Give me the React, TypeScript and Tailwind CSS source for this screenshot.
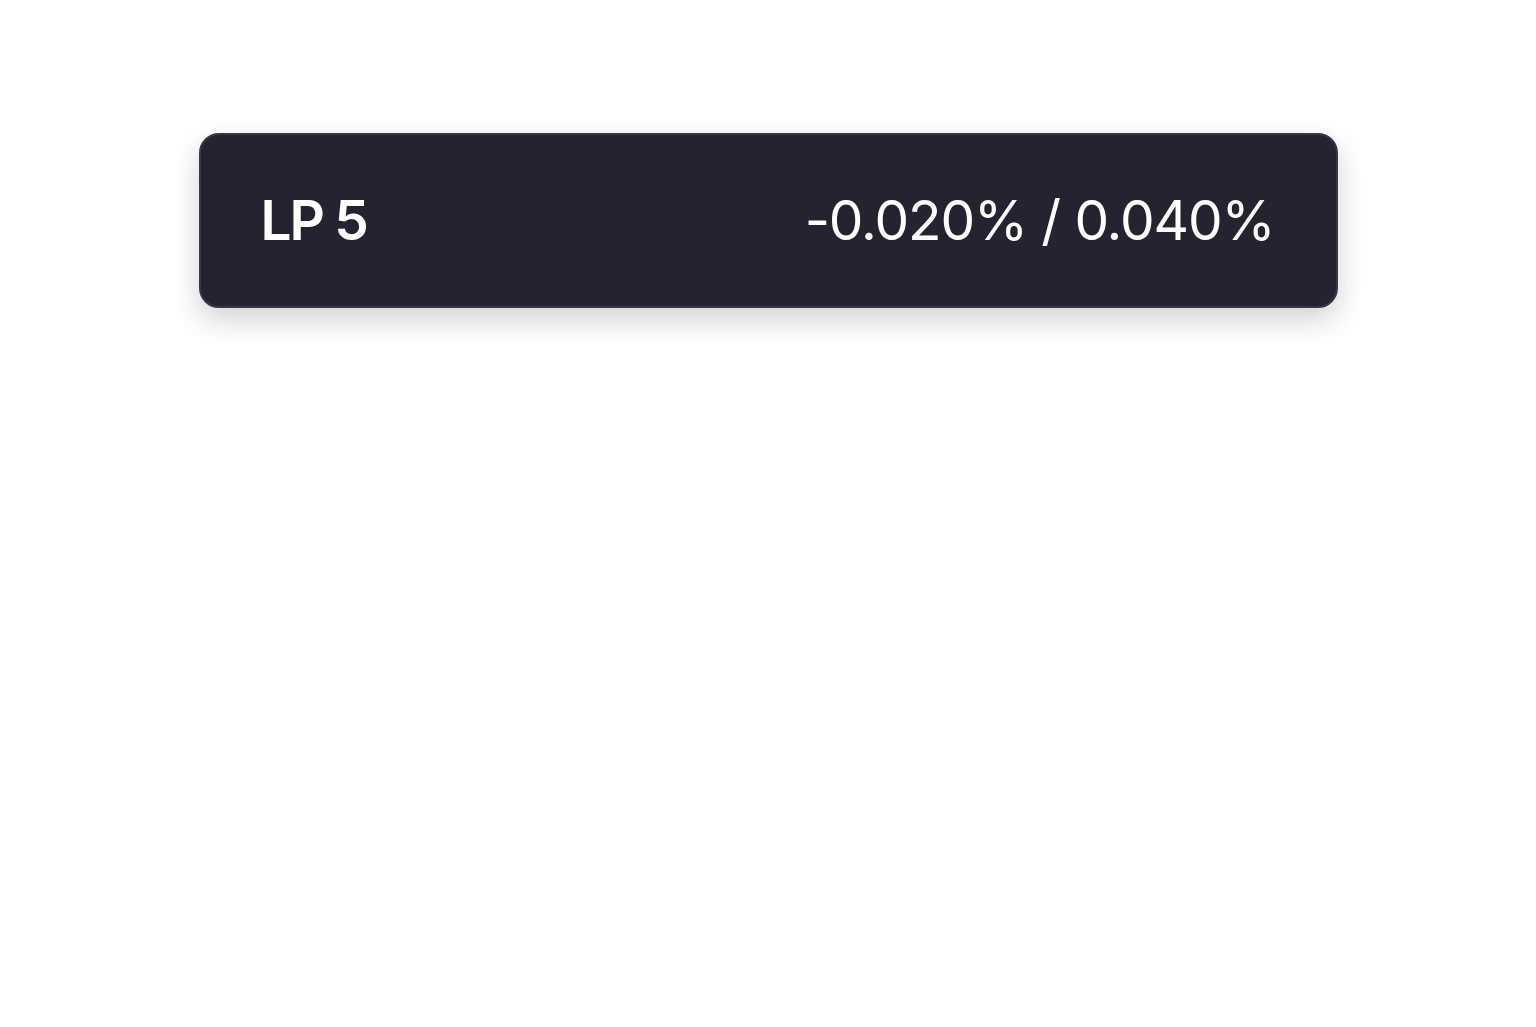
import React from 'react';

interface RateRowProps {
  label: string;
  maker: number;
  taker: number;
}

const fmt = (v: number) => `${v.toFixed(3)}%`;

const RateRow: React.FC<RateRowProps> = ({ label, maker, taker }) => (
  <div className="flex h-[175px] items-center justify-between rounded-[20px] border-2 border-[#393743] bg-[#262330] pl-[60px] pr-[61px] shadow-[0_12px_30px_rgba(0,0,0,0.18)]">
    <span className="text-[55px] font-semibold leading-none tracking-[-0.04em] text-white">{label}</span>
    <span className="text-[55px] font-normal leading-none tracking-[-0.02em] text-white">
      {fmt(maker)} / {fmt(taker)}
    </span>
  </div>
);

export default function App() {
  return (
    <div className="min-h-screen bg-white pt-[133px] font-['Inter',_'Liberation_Sans',_sans-serif]">
      <div className="mx-auto w-[1139px]">
        <RateRow label="LP 5" maker={-0.02} taker={0.04} />
      </div>
    </div>
  );
}
